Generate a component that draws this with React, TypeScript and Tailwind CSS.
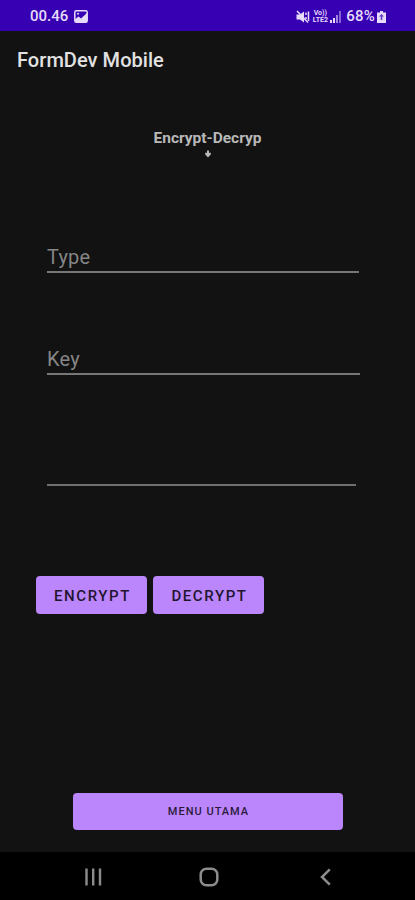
import React from 'react';

const StatusBar: React.FC = () => (
  <header className="h-[31px] shrink-0 bg-[#3700b3] flex items-center justify-between pl-[30px] pr-[29px] text-[#e6dcfa]">
    <div className="flex items-center gap-[6px] pt-[2px]">
      <span className="text-[15px] leading-none font-medium">00.46</span>
      <svg className="w-[14px] h-[13px]" viewBox="0 0 14 13" fill="none">
        <rect x="0.8" y="0.8" width="12.4" height="11.4" rx="1.5" stroke="currentColor" strokeWidth="1.5" />
        <path d="M1 11V9.2L4.5 6.5L7 8.5L13 3V12H2Z" fill="currentColor" />
        <circle cx="4" cy="3.8" r="1" fill="currentColor" />
      </svg>
    </div>
    <div className="flex items-center pt-[2px]">
      <svg className="w-[14px] h-[14px]" viewBox="0 0 14 14" fill="none" stroke="currentColor">
        <path d="M0.5 4.5H4L8 1.5V12.5L4 9.5H0.5Z" fill="currentColor" stroke="none" />
        <path d="M1 1L12 12.5" strokeWidth="1.5" />
        <path d="M10 2.5V5M10 7V9M12.5 1.5V11" strokeWidth="1.5" />
      </svg>
      <div className="ml-[2px] w-[16px] flex flex-col items-center text-[7px] leading-[7px] font-bold">
        <span>Vo))</span>
        <span>LTE2</span>
      </div>
      <svg className="ml-[2px] w-[11px] h-[12px]" viewBox="0 0 11 12" fill="currentColor">
        <rect x="0" y="9" width="2" height="3" />
        <rect x="3" y="7" width="2" height="5" />
        <rect x="6" y="4" width="2" height="8" opacity="0.6" />
        <rect x="9" y="0" width="2" height="12" opacity="0.45" />
      </svg>
      <span className="ml-[5px] text-[15px] leading-none font-medium tracking-[0.2px]">68%</span>
      <svg className="ml-[2px] w-[9px] h-[12px]" viewBox="0 0 9 12">
        <path d="M3 0H6V1.5H9V12H0V1.5H3Z" fill="currentColor" />
        <path d="M2 5.5L4.5 3L7 5.5H5.3V9H3.7V5.5Z" fill="#3700b3" opacity="0.75" />
      </svg>
    </div>
  </header>
);

const App: React.FC = () => {
  return (
    <div className="w-full h-[900px] flex flex-col bg-[#121212] font-['Roboto',sans-serif] overflow-hidden">
      <StatusBar />
      <div className="h-[58px] shrink-0 flex items-center pl-[17px]">
        <h1 className="text-[20px] leading-6 font-medium tracking-[0.05px] text-[#e2e2e2]">FormDev Mobile</h1>
      </div>

      <main className="flex-1 flex flex-col">
        <div className="mt-[40px] h-[32px] flex flex-col items-center text-[#b8b8b8]">
          <h2 className="text-[15.5px] leading-[18px] font-bold">Encrypt-Decryp</h2>
          <svg className="mt-[3px] w-[6px] h-[8px]" viewBox="0 0 6 8" fill="currentColor">
            <path d="M2 0.5H4V2.7H5.8V4.5L3 7.5L0.2 4.5V2.7H2Z" />
          </svg>
        </div>

        <input
          placeholder="Type"
          className="mt-[82px] ml-[47px] w-[312px] h-[30px] border-b-2 border-[#777777] text-[20px] tracking-[0.2px] text-white placeholder:text-[#858585] outline-none"
        />
        <input
          placeholder="Key"
          className="mt-[72px] ml-[47px] w-[313px] h-[30px] border-b-2 border-[#777777] text-[20px] tracking-[0.2px] text-white placeholder:text-[#858585] outline-none"
        />
        <input className="mt-[81px] ml-[47px] w-[309px] h-[30px] border-b-2 border-[#6f6f6f] text-[20px] text-white outline-none" />

        <div className="mt-[90px] ml-[36px] flex gap-[6px]">
          <button className="w-[111px] h-[38px] pt-[2px] pl-[2px] rounded-[4px] bg-[#bb86fc] text-[15px] font-medium tracking-[1.6px] text-[#21152e]">
            ENCRYPT
          </button>
          <button className="w-[111px] h-[38px] pt-[2px] pl-[2px] rounded-[4px] bg-[#bb86fc] text-[15px] font-medium tracking-[1.6px] text-[#21152e]">
            DECRYPT
          </button>
        </div>

        <button className="mt-[179px] ml-[73px] w-[270px] h-[37px] pt-[2px] pl-px rounded-[4px] bg-[#bb86fc] text-[11px] font-medium tracking-[1px] text-[#2b1b3d]">
          MENU UTAMA
        </button>
      </main>

      <nav className="h-[48px] shrink-0 bg-black text-[#8c8c8c]">
        <svg className="w-[415px] h-[48px]" viewBox="0 0 415 48" fill="none" stroke="currentColor">
          <path d="M86.5 16.5V33.5M93.2 16.5V33.5M100 16.5V33.5" strokeWidth="2.4" />
          <rect x="200.7" y="16.7" width="16.6" height="16.6" rx="5.8" strokeWidth="2.5" />
          <path d="M329.8 17.3L322 25L329.8 32.7" strokeWidth="2.5" />
        </svg>
      </nav>
    </div>
  );
};

export default App;
